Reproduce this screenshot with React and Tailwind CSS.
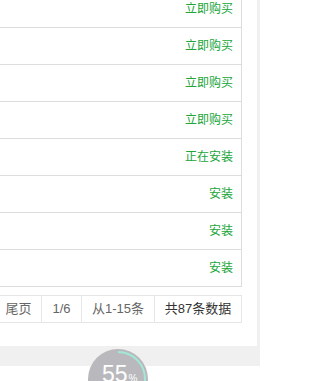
import React from "react";

const rows = ["立即购买", "立即购买", "立即购买", "立即购买", "正在安装", "安装", "安装", "安装"];

export default function App() {
  return (
    <div
      className="relative w-[260px] h-[381px] overflow-hidden bg-[#f0f0f0] flex flex-col"
      style={{ fontFamily: '"Liberation Sans", "Noto Sans CJK SC", sans-serif' }}
    >
      <div className="w-[257px] h-[346px] bg-white shrink-0 overflow-hidden">
        <div className="w-[242px] mt-[-9px] border-r border-[#ddd]">
          {rows.map((t, i) => (
            <div
              key={i}
              className="h-[37px] border-b border-[#ddd] flex items-center justify-end pr-2 text-[12px] text-[#20a53a]"
            >
              {t}
            </div>
          ))}
        </div>
        <div className="w-[242px] mt-[8px] flex justify-end overflow-hidden">
          <div className="flex shrink-0 h-[28px] border border-[#e6e6e6] text-[13px] text-[#666]">
            <span className="w-[80px] shrink-0 flex items-center justify-center border-r border-[#e6e6e6]">下一页</span>
            <span className="w-[46px] shrink-0 flex items-center justify-center border-r border-[#e6e6e6]">尾页</span>
            <span className="w-[40px] shrink-0 flex items-center justify-center border-r border-[#e6e6e6]">1/6</span>
            <span className="w-[73px] shrink-0 flex items-center justify-center border-r border-[#e6e6e6]">从1-15条</span>
            <span className="w-[86px] shrink-0 flex items-center justify-center text-[#333]">共87条数据</span>
          </div>
        </div>
      </div>
      <div className="h-[20px] shrink-0 bg-[#f0f0f0]" />
      <div className="flex-1 bg-white" />
      <div className="absolute left-[88px] top-[349px] w-[60px] h-[60px] rounded-full bg-[#b9b9bd]">
        <svg className="absolute inset-0" width="60" height="60" viewBox="0 0 60 60">
          <circle
            cx="30"
            cy="30"
            r="27"
            fill="none"
            stroke="#a3e8d6"
            strokeWidth="2"
            strokeDasharray={`${2 * Math.PI * 27 * 0.3} ${2 * Math.PI * 27}`}
            transform="rotate(-90 30 30)"
          />
        </svg>
        <div className="absolute left-[14px] top-[14px] flex items-baseline text-white">
          <span className="text-[23px] font-light leading-none">55</span>
          <span className="text-[10px] leading-none ml-[1px]">%</span>
        </div>
      </div>
    </div>
  );
}
